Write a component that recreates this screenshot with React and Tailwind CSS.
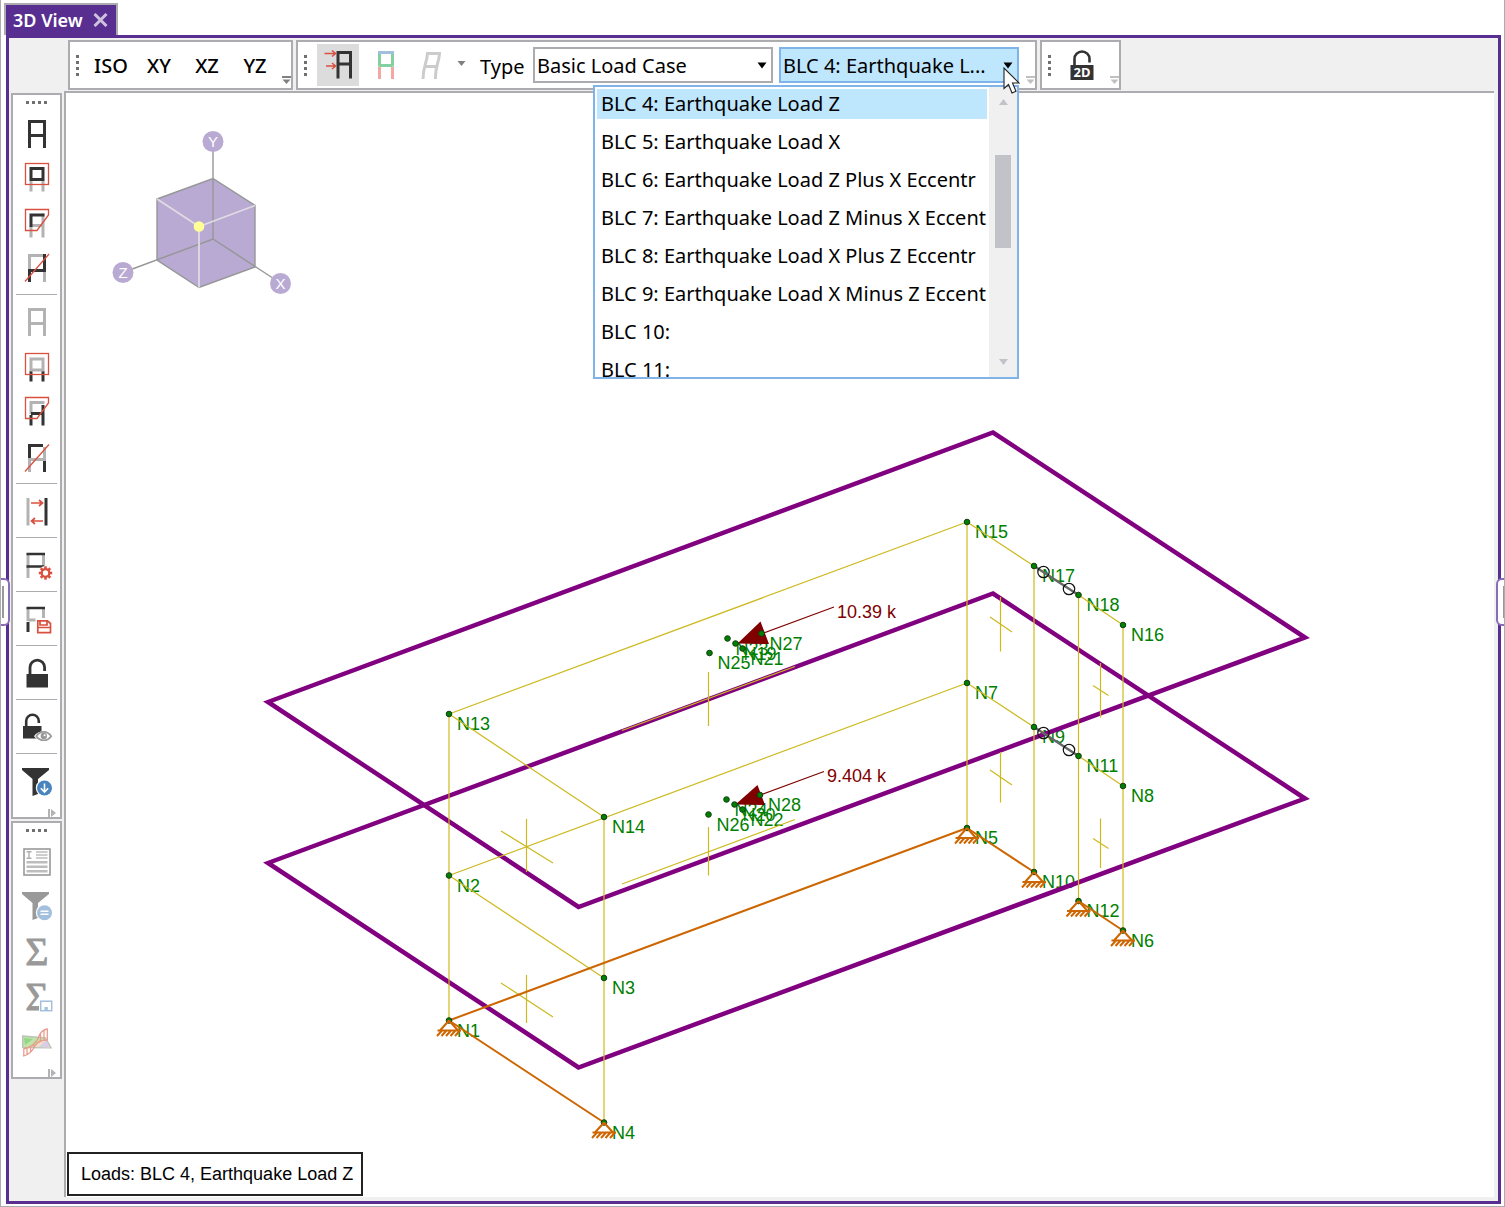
import React from "react";

const INK = "#333333";
const PALE = "#b3b3b3";
const RED = "#d9503f";

/* ---------- shared toolbar pieces ---------- */

function Grip({ vertical }) {
  return (
    <div className={vertical ? "flex w-[17px] shrink-0 flex-col gap-[3px] pl-1.5" : "flex h-[15px] justify-center gap-[3px] pt-1.5"}>
      {[0, 1, 2, 3].map((i) => (
        <span key={i} className="size-[3px] bg-[#707070]" />
      ))}
    </div>
  );
}

function Overflow({ color, className }) {
  return (
    <button aria-label="Toolbar options" className={"flex flex-col items-end justify-end self-stretch pb-1 " + className}>
      <svg width="9" height="8" viewBox="0 0 9 8">
        <path d="M0 1H9" stroke={color} strokeWidth="2" />
        <path d="M0.5 3.5H8.5L4.5 8Z" fill={color} />
      </svg>
    </button>
  );
}

function SideOverflow() {
  return (
    <button aria-label="More tools" className="flex h-3.5 w-full items-end justify-end pr-1">
      <svg width="8" height="8" viewBox="0 0 8 8">
        <path d="M1 0V8" stroke="#b3b3b3" strokeWidth="2" />
        <path d="M3 0L8 4L3 8Z" fill="#b3b3b3" />
      </svg>
    </button>
  );
}

function Tool({ label, children }) {
  return (
    <button aria-label={label} title={label} className="block h-[45px] w-full">
      <svg viewBox="0 0 47 45" className="block h-[45px] w-[47px]" fill="none">
        {children}
      </svg>
    </button>
  );
}

const Rule = () => <hr className="mx-[3px] my-1 h-px border-0 bg-[#ababb0]" />;

const P = ({ d, c = INK, w = 3 }) => <path d={d} stroke={c} strokeWidth={w} />;

const Badge = ({ x, y, fill, children }) => (
  <>
    <circle cx={x} cy={y} r="8.7" fill="#fff" />
    <circle cx={x} cy={y} r="7.5" fill={fill} />
    {children}
  </>
);

const Funnel = ({ fill }) => <path d="M9 10H36V12L25 21V36L19.5 38V21L9 12Z" fill={fill} />;

const Sigma = () => (
  <text x="24" y="37" textAnchor="middle" fontSize="40" fill="#999" stroke="#999" strokeWidth="0.8" fontFamily='"Liberation Serif", serif'>
    Σ
  </text>
);

const gearTeeth = [0, 45, 90, 135, 180, 225, 270, 315];

function MainTools() {
  return (
    <div role="toolbar" aria-label="Selection" className="border-2 border-[#ababb0] bg-white">
      <Grip />
      <Tool label="Select all">
        <P d="M16.5 38V11.5H31.5V38M16.5 25.5H31.5" />
      </Tool>
      <Tool label="Box select">
        <P d="M18 26V36.5M30 26V36.5" c={PALE} />
        <rect x="18" y="13.5" width="12" height="11" stroke={INK} strokeWidth="3" />
        <rect x="12.500" y="8.5" width="23" height="21" stroke={RED} strokeWidth="1.3" />
      </Tool>
      <Tool label="Polygon select">
        <P d="M30 13.5V37.5M18 26V37.5M18 25.5H30" c={PALE} />
        <P d="M18 27V15H31.5" />
        <path d="M12.5 9.5H35.5V15L24 30.5H12.5Z" stroke={RED} strokeWidth="1.3" />
      </Tool>
      <Tool label="Line select">
        <P d="M16.5 24V10.5H33M31.5 24V37" c={PALE} />
        <P d="M31.5 9V25.5H16.5V37" />
        <path d="M12 36.5L36 9" stroke={RED} strokeWidth="1.3" />
      </Tool>
      <Rule />
      <Tool label="Unselect all">
        <P d="M16.5 37V10.5H31.5V37M16.5 24.5H31.5" c={PALE} />
      </Tool>
      <Tool label="Box unselect">
        <P d="M18 27V37.5M30 27V37.5" />
        <rect x="18" y="15" width="12" height="11" stroke={PALE} strokeWidth="3" />
        <rect x="12.5" y="9.5" width="23" height="21" stroke={RED} strokeWidth="1.3" />
      </Tool>
      <Tool label="Polygon unselect">
        <P d="M18 25V13.5H31.5" c={PALE} />
        <P d="M30 16V36.5M18 36.5V26M18 24.5H30" />
        <path d="M12.5 8.5H35.5V14L24 29.5H12.5Z" stroke={RED} strokeWidth="1.3" />
      </Tool>
      <Tool label="Line unselect">
        <P d="M16.5 24V38M31.5 13V28M16.5 25.5H31.5" c={PALE} />
        <P d="M16.5 24V11.5H30M31.5 27V38" />
        <path d="M12 37.5L36 10.5" stroke={RED} strokeWidth="1.3" />
      </Tool>
      <Rule />
      <Tool label="Invert selection">
        <P d="M15 10V37.5" c={PALE} />
        <P d="M33 10V37.5" />
        <path d="M18 15H29.5M26 12L29.5 15L26 18M30 33H18.5M22 30L18.5 33L22 36" stroke={RED} strokeWidth="1.7" />
      </Tool>
      <Rule />
      <Tool label="Criteria select">
        <P d="M15 12V36M30.5 12V24" c={PALE} />
        <P d="M13.5 12H32M13.5 24.5H31" w={2.5} />
        <circle cx="32.5" cy="31" r="7" fill="#fff" />
        {gearTeeth.map((a) => (
          <path key={a} d="M32.5 24.3V28" stroke={RED} strokeWidth="2.6" transform={`rotate(${a} 32.5 31)`} />
        ))}
        <circle cx="32.5" cy="31" r="3.8" stroke={RED} strokeWidth="2.2" />
      </Tool>
      <Rule />
      <Tool label="Save selection">
        <P d="M15 12V25M30.5 12V22M15 24H22.5" c={PALE} />
        <P d="M13.5 12H32" w={2.5} />
        <P d="M15 26V36" />
        <path d="M24.8 24.8H34.5L37.5 27.5V36.7H24.8Z" stroke={RED} strokeWidth="1.7" fill="#fff" />
        <path d="M27 25V29H34V25M25 31.5H37" stroke={RED} strokeWidth="1.7" />
      </Tool>
      <Rule />
      <Tool label="Lock unselected">
        <rect x="13.5" y="24" width="21.5" height="13.5" fill={INK} />
        <P d="M17 25V17.5A7.3 7.3 0 0 1 31.6 17.5V21" w={2.8} />
      </Tool>
      <Rule />
      <Tool label="Lock and view">
        <rect x="10" y="22" width="18.5" height="12.5" fill={INK} />
        <P d="M13.2 23V17A6.3 6.3 0 0 1 25.8 17V19" w={2.6} />
        <path d="M21 32.2C25 25.5 36.5 25.5 40.5 32.2C36.5 38.5 25 38.5 21 32.2Z" fill="#fff" />
        <path d="M23.3 32.2C27 26.5 34.5 26.5 38.2 32.2C34.5 37.6 27 37.6 23.3 32.2Z" stroke="#999" strokeWidth="1.7" />
        <circle cx="30.8" cy="32" r="3.2" fill="#999" />
        <circle cx="31.6" cy="31.2" r="1" fill="#fff" />
      </Tool>
      <Rule />
      <Tool label="Filter">
        <Funnel fill={INK} />
        <Badge x={31.5} y={30} fill="#4a84bf">
          <path d="M31.5 25.5V33.5M27.8 30.2L31.5 34L35.2 30.2" stroke="#fff" strokeWidth="1.6" />
        </Badge>
      </Tool>
      <SideOverflow />
    </div>
  );
}

function ResultTools() {
  return (
    <div role="toolbar" aria-label="Results" className="border-2 border-[#ababb0] bg-white">
      <Grip />
      <Tool label="Report">
        <rect x="11" y="11" width="26" height="26" stroke="#999" strokeWidth="1.6" />
        <path d="M13.5 13.8H18.5M13.5 20.3H18.5M16 13.8V20.3" stroke="#b0b0b0" strokeWidth="1.4" />
        <path d="M23 14H34.5M23 17H34.5M23 20H34.5" stroke="#bdbdbd" strokeWidth="1.3" />
        <path d="M13.5 24.3H34.5M13.5 28.8H34.5M13.5 33.3H34.5" stroke="#bdbdbd" strokeWidth="2.6" />
      </Tool>
      <Tool label="Result filter">
        <g transform="translate(0 -1)">
          <Funnel fill="#999" />
        </g>
        <Badge x={31.5} y={29.7} fill="#a3bfde">
          <path d="M27.5 28.3H35.5M27.5 31.3H35.5" stroke="#fff" strokeWidth="1.6" />
        </Badge>
      </Tool>
      <Tool label="Sum">
        <Sigma />
      </Tool>
      <Tool label="Sum and save">
        <Sigma />
        <rect x="26" y="26.5" width="14" height="12.5" fill="#fff" />
        <rect x="27.7" y="28.2" width="11" height="9.5" stroke="#a3bfde" strokeWidth="1.5" />
        <path d="M31.5 34H34.8V38H31.5Z" fill="#a3bfde" />
      </Tool>
      <Tool label="Diagrams">
        <path d="M9.7 18L32.5 20L38 29.8L9.7 29.5Z" fill="#bfe5a8" stroke="#b9c4b4" strokeWidth="1.4" />
        <path d="M20 29L31 20.5L37 29.5Z" fill="#f0dfc4" />
        <path d="M26 29L33 22L37 29.5Z" fill="#d9cdea" />
        <path d="M11 20L20 21L12 27Z" fill="#93d68a" />
        <path
          d="M10.8 38V31C19 29 24 24 26 18C28 13.5 31 11.5 34.3 11V22C28 22 24 24 22 28C19 34 16 36.5 10.8 38ZM14 30.5V36.5M17.5 28.5V34.5M20.8 26V30M27.5 16V22.5M31 12.5V22"
          stroke="#ea9c8f"
          strokeWidth="1.3"
        />
      </Tool>
      <SideOverflow />
    </div>
  );
}

/* ---------- top toolbars ---------- */

const loadCases = [
  "BLC 4: Earthquake Load Z",
  "BLC 5: Earthquake Load X",
  "BLC 6: Earthquake Load Z Plus X Eccentr",
  "BLC 7: Earthquake Load Z Minus X Eccent",
  "BLC 8: Earthquake Load X Plus Z Eccentr",
  "BLC 9: Earthquake Load X Minus Z Eccent",
  "BLC 10:",
  "BLC 11:",
];

const Caret = () => (
  <svg width="10" height="7" viewBox="0 0 10 7" className="pointer-events-none absolute right-1.5 top-[15px]">
    <path d="M0.5 0.5H9.5L5 6.5Z" fill="#000" />
  </svg>
);

function LoadCaseList() {
  return (
    <div className="absolute right-0 top-[38px] z-10 flex h-[294px] w-[426px] overflow-hidden border-2 border-[#7eb4ea] bg-white">
      <ul role="listbox" aria-label="Load cases" className="min-w-0 flex-1 px-0.5 pt-0.5">
        {loadCases.map((name, i) => (
          <li
            key={name}
            role="option"
            aria-selected={i === 0}
            className={"mb-2 h-[30px] whitespace-nowrap px-1 leading-[29px] " + (i === 0 ? "bg-[#bee6fd]" : "")}
          >
            {name}
          </li>
        ))}
      </ul>
      <div className="flex w-7 shrink-0 flex-col items-center bg-[#f0f0f0] py-3">
        <svg width="9" height="6" viewBox="0 0 9 6">
          <path d="M0 6L4.5 0L9 6Z" fill="#c2c3c9" />
        </svg>
        <div className="mt-[50px] h-[93px] w-4 bg-[#c2c3c9]" />
        <svg width="9" height="6" viewBox="0 0 9 6" className="mt-auto">
          <path d="M0 0L4.5 6L9 0Z" fill="#c2c3c9" />
        </svg>
      </div>
    </div>
  );
}

function TopBar() {
  return (
    <div className="flex gap-[3px] pb-px pl-[59px] pt-0.5 text-xl text-black">
      <div role="toolbar" aria-label="Views" className="flex h-[50px] items-center border-2 border-[#ababb0] bg-white">
        <Grip vertical />
        {["ISO", "XY", "XZ", "YZ"].map((v) => (
          <button key={v} className="w-12 pt-0.5 font-medium">
            {v}
          </button>
        ))}
        <Overflow color="#808080" className="w-3" />
      </div>

      <div role="toolbar" aria-label="Loads" className="flex h-[50px] items-center border-2 border-[#ababb0] bg-white">
        <Grip vertical />
        <button aria-label="Show loads" className="ml-0.5 size-[42px] bg-[#dcdcdc]">
          <svg viewBox="0 0 42 42" className="size-[42px]" fill="none">
            <P d="M21 34.5V8.5H33.5V34.5M21 20H33.5" />
            <path d="M7.5 9.5H18.5M15 6.5L18.5 9.5L15 12.5M9 22H18.5M15 19L18.5 22L15 25" stroke={RED} strokeWidth="1.6" />
          </svg>
        </button>
        <button aria-label="Show member colors" className="flex w-[54px] justify-center">
          <svg width="16" height="28" viewBox="0 0 16 28" fill="none">
            <P d="M1.5 16V28M14.5 16V28" c="#f0a8a0" />
            <P d="M1.5 3V15.5M14.5 3V15.5M1.5 14.5H14.5" c="#85d0a0" />
            <P d="M0 1.5H16" c="#a3bfde" />
          </svg>
        </button>
        <button aria-label="Show deflected shape" className="flex w-9 justify-center">
          <svg width="20" height="28" viewBox="0 0 20 28" fill="none">
            <P d="M2 28C2 15 6 12 6.5 2.5H18.5C18 12 14 15 14.5 28M3.5 15.5H16" c="#cccccc" />
          </svg>
        </button>
        <button aria-label="More shapes" className="flex w-6 justify-center pb-1">
          <svg width="9" height="5" viewBox="0 0 9 5">
            <path d="M0.5 0H8.5L4.5 5Z" fill="#808080" />
          </svg>
        </button>
        <label htmlFor="load-type" className="w-[60px] pl-[7px] pt-1">
          Type
        </label>
        <div className="relative">
          <select id="load-type" className="h-9 w-60 appearance-none border-2 border-[#ababb0] bg-white pl-0.5 pt-0.5">
            <option>Basic Load Case</option>
          </select>
          <Caret />
        </div>
        <div className="relative ml-1.5">
          <select aria-label="Load case" className="h-9 w-60 appearance-none border-2 border-[#7eb4ea] bg-[#bee6fd] pl-0.5 pt-0.5">
            <option>BLC 4: Earthquake L...</option>
          </select>
          <Caret />
          <LoadCaseList />
          <svg width="18" height="28" viewBox="0 0 18 28" className="pointer-events-none absolute -right-0.5 top-5 z-20">
            <path d="M1 1V21.5L5.5 17.5L9 26L13 24.3L9.5 16H16Z" fill="#fff" stroke="#222" strokeWidth="1.1" />
          </svg>
        </div>
        <Overflow color="#c0c0c0" className="w-4" />
      </div>

      <div role="toolbar" aria-label="Lock" className="flex h-[50px] items-center border-2 border-[#ababb0] bg-white">
        <Grip vertical />
        <button aria-label="Lock to 2D" className="flex w-[46px] justify-center">
          <svg width="24" height="31" viewBox="0 0 24 31" fill="none">
            <rect x="0.5" y="15" width="23" height="15" fill={INK} />
            <P d="M4.5 16V9A7.5 7.5 0 0 1 19.5 9V12.5" w={2.6} />
            <text x="12" y="27" textAnchor="middle" fontSize="13" fontWeight="700" fill="#fff" fontFamily='"Noto Sans", sans-serif'>
              2D
            </text>
          </svg>
        </button>
        <Overflow color="#c0c0c0" className="w-3.5" />
      </div>
    </div>
  );
}

/* ---------- structural model ---------- */

const nodes = {
  N15: [967, 522], N17: [1034, 566], N18: [1078.5, 595], N16: [1123, 625],
  N7: [967, 683], N9: [1034, 727], N11: [1078.5, 756], N8: [1123, 786],
  N5: [967, 828], N10: [1034, 872], N12: [1078.5, 901], N6: [1123, 930.5],
  N13: [449, 714], N14: [604, 817], N2: [449, 875.5], N3: [604, 978],
  N1: [449, 1020.5], N4: [604, 1122.5],
  N25: [709.5, 653], N23: [727.5, 638.5], N19: [735.5, 643.5], N21: [742.5, 648.5], N27: [761.5, 633.5],
  N26: [708.5, 814.5], N24: [726.5, 799.5], N20: [734.5, 804.5], N22: [742.5, 809.5], N28: [760, 795],
};

const members = [
  ["N13", "N15"], ["N13", "N14"], ["N2", "N7"], ["N2", "N3"],
  ["N15", "N17"], ["N18", "N16"], ["N7", "N9"], ["N11", "N8"],
  ["N13", "N1"], ["N14", "N4"], ["N15", "N5"], ["N17", "N10"], ["N18", "N12"], ["N16", "N6"],
];
const links = [["N17", "N18"], ["N9", "N11"]];
const bases = [["N1", "N5"], ["N1", "N4"], ["N5", "N10"], ["N12", "N6"]];
const supports = ["N1", "N4", "N5", "N10", "N12", "N6"];
const hinges = [[1043.5, 572], [1069, 589], [1043.5, 733], [1069, 750]];

const seg = ([a, b]) => `M${nodes[a].join(" ")}L${nodes[b].join(" ")}`;
const segs = (list) => list.map(seg).join("");

function ViewCube() {
  const axes = [["Y", 213, 141.5], ["Z", 123, 272.5], ["X", 280.5, 283.5]];
  return (
    <g fill="none" strokeWidth="1.4">
      <path d="M213 178.5L255 205.5V267L199 287.5L157 260V199Z" fill="#b9aad3" />
      <path d="M213 151V239M157 199L213 178.5L255 205.5V267L199 287.5L157 260ZM131 269.5L213 239L272 277.5" stroke="#969696" />
      <path d="M157 199L199 226.5L255 205.5M199 226.5V287.5" stroke="#dedbe2" strokeWidth="1.8" />
      <circle cx="199" cy="226.5" r="5.3" fill="#ffff96" />
      {axes.map(([t, x, y]) => (
        <g key={t}>
          <circle cx={x} cy={y} r="10.5" fill="#b9aad3" />
          <text x={x} y={y + 5.5} textAnchor="middle" fontSize="15" fill="#fff" fontFamily='"Liberation Sans", sans-serif'>
            {t}
          </text>
        </g>
      ))}
    </g>
  );
}

function Model() {
  return (
    <svg viewBox="66 93 1428 1104" className="block w-full" fill="none" role="img" aria-label="Structural model">
      <ViewCube />
      <g fill="#008000" fontSize="18" fontFamily='"Liberation Sans", sans-serif'>
        {Object.entries(nodes).map(([name, [x, y]]) => (
          <text key={name} x={x + 8} y={y + 16}>
            {name}
          </text>
        ))}
      </g>
      <path d="M268 702L993 432.5L1305 637.5L578.5 907ZM268 863L993 593.5L1305 798.5L578.5 1067.5Z" stroke="#800080" strokeWidth="4.5" />
      <path d={segs(members)} stroke="#cdb91e" strokeWidth="1.2" />
      <path
        d="M526.5 819V872M501 831L553 863M526.5 975V1023M501 983L553 1017M708.5 672V726M622 730.5L795 666.5M708.5 827V875.5M622 884L795 819.5M1000.5 597V651.5M990 617L1012 632M1100.5 663V717.5M1093 685.5L1108.5 695.5M1000.5 752V802.5M990 770L1012 785M1100.5 818.5V868M1093 838.5L1108.5 848.5"
        stroke="#cdb91e"
        strokeWidth="1.2"
      />
      <path d={segs(links)} stroke="#666" strokeWidth="2.4" />
      <path d={segs(bases)} stroke="#cd6600" strokeWidth="2" />
      <path d="M737.5 643.5L760.5 621.5L769 644ZM735.5 804.5L757.5 785L765 805Z" fill="#800000" />
      <path d="M761 634L834 607M760 795L824 771.5" stroke="#800000" strokeWidth="1.2" />
      {Object.entries(nodes).map(([name, [x, y]]) => (
        <circle key={name} cx={x} cy={y} r="2.8" fill="#008000" stroke="#143c14" strokeWidth="1" />
      ))}
      {supports.map((name) => (
        <path
          key={name}
          transform={`translate(${nodes[name].join(" ")})`}
          d="M0 0L-9 10M0 0L9 10M-11.5 10H12M-7 10L-12 15.5M-2.5 10L-7.5 15.5M2 10L-3 15.5M6.5 10L1.5 15.5M11 10L6 15.5"
          stroke="#cd6600"
          strokeWidth="2"
        />
      ))}
      {hinges.map(([x, y]) => (
        <circle key={x + "-" + y} cx={x} cy={y} r="5.7" stroke="#111" strokeWidth="1.2" />
      ))}
      <g fill="#800000" fontSize="18" fontFamily='"Liberation Sans", sans-serif'>
        <text x="837" y="618">10.39 k</text>
        <text x="827" y="782">9.404 k</text>
      </g>
    </svg>
  );
}

/* ---------- window ---------- */

export default function App() {
  return (
    <div className="relative flex min-h-screen flex-col overflow-hidden border-x border-b border-[#ababb0] bg-white pb-0.5 pl-[5px] pr-[3px] pt-[3px] font-['Noto_Sans',sans-serif]">
      <div className="-ml-0.5 flex">
        <div className="flex h-8 items-center border-x-2 border-t-2 border-[#ababb0] bg-[#582f91] pl-[7px] pr-2 text-white">
          <span className="text-lg font-semibold leading-7">3D View</span>
          <button aria-label="Close 3D View" className="ml-2.5">
            <svg width="15" height="14" viewBox="0 0 15 14">
              <path d="M1.5 1L13.5 13M13.5 1L1.5 13" stroke="#cdc1de" strokeWidth="3" />
            </svg>
          </button>
        </div>
      </div>

      <div className="flex flex-1 flex-col border-[3px] border-[#582f91] bg-[#f0f0f0]">
        <TopBar />
        <div className="flex flex-1 items-stretch">
          <div className="flex w-[55px] shrink-0 flex-col gap-0.5 pl-0.5 pr-0.5 pt-0.5">
            <MainTools />
            <ResultTools />
          </div>
          <main className="relative mb-1 mr-1 flex-1 border-l-2 border-t-2 border-[#ababb0] bg-white">
            <Model />
            <div className="absolute bottom-px left-px border-2 border-[#222] bg-white py-2 pl-3 pr-2 font-['Liberation_Sans',sans-serif] text-lg leading-6 text-black">
              Loads: BLC 4, Earthquake Load Z
            </div>
          </main>
        </div>
      </div>

      <button aria-label="Expand left panel" className="absolute -left-[5px] top-[578px] h-12 w-3.5 rounded-md border-2 border-[#8a6cb8] bg-white">
        <span className="ml-1 block h-8 w-0.5 bg-[#999]" />
      </button>
      <button aria-label="Expand right panel" className="absolute -right-1.5 top-[578px] h-12 w-3.5 rounded-md border-2 border-[#8a6cb8] bg-white">
        <span className="ml-[5px] block h-8 w-0.5 bg-[#999]" />
      </button>
    </div>
  );
}
